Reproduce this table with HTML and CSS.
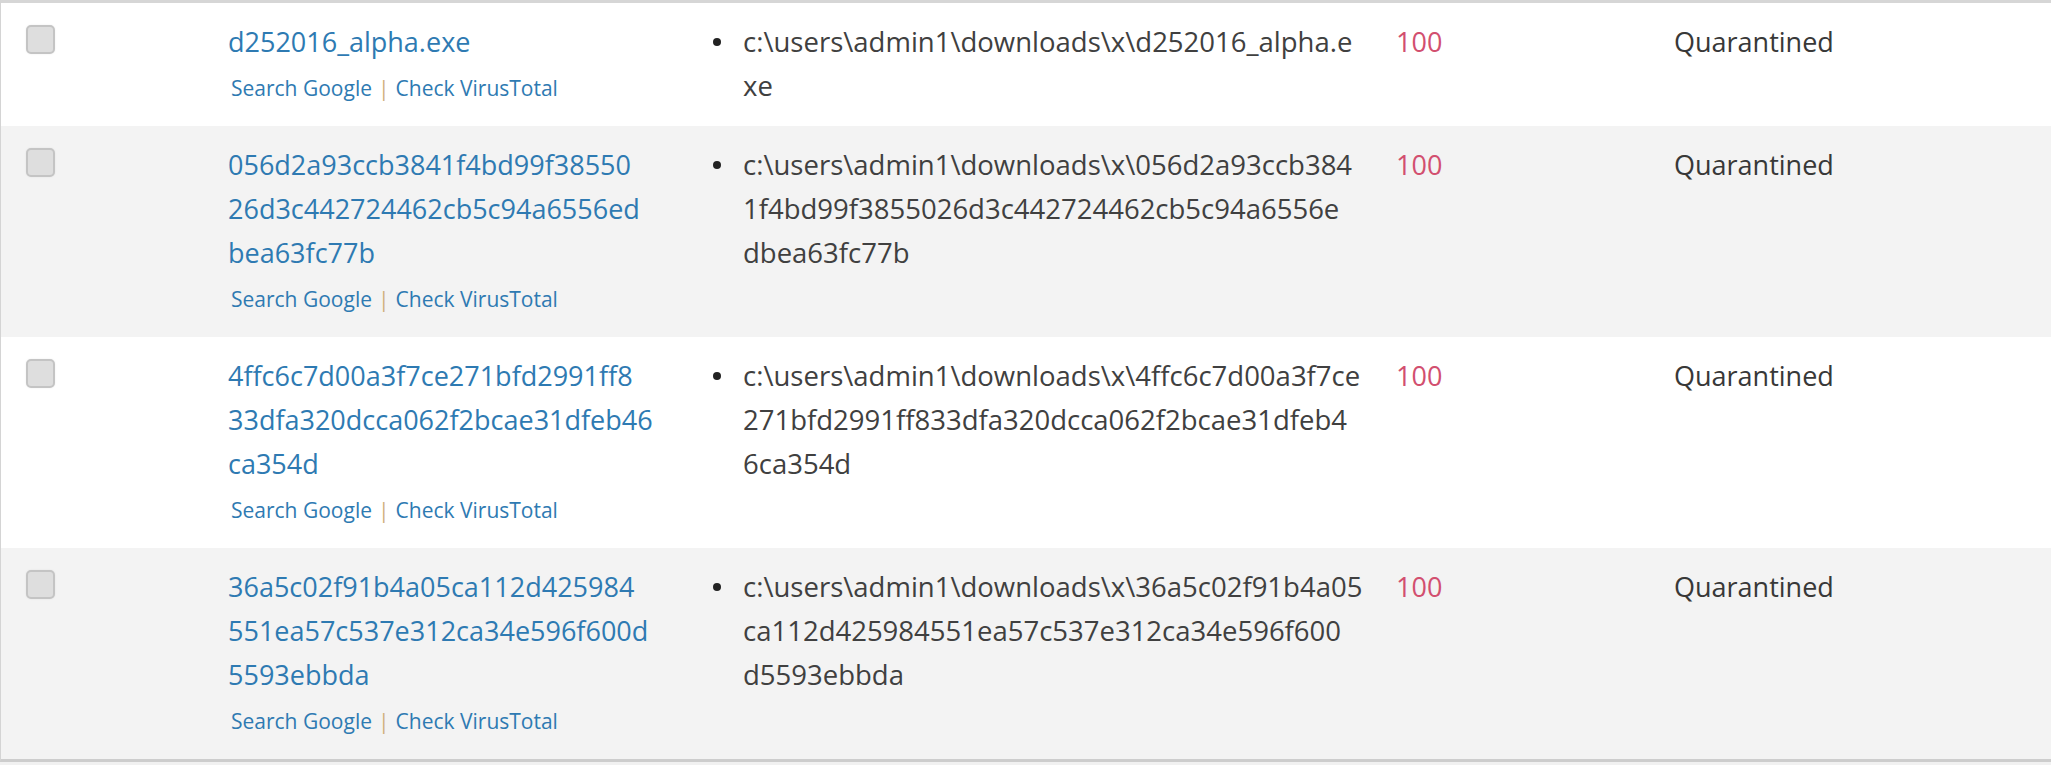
FILE: index.html
```html
<!DOCTYPE html>
<html lang="en">
<head>
<meta charset="utf-8">
<title>Quarantine list</title>
<link rel="stylesheet" href="styles.css">
</head>
<body>
<div class="table">
  <div class="row">
    <div class="cell cell-check"><input type="checkbox" class="cb"></div>
    <div class="cell cell-file">
      <a class="fname" href="#">d252016_alpha.exe</a>
      <div class="row-actions"><a href="#">Search Google</a><span class="sep">|</span><a href="#">Check VirusTotal</a></div>
    </div>
    <div class="cell cell-path">
      <ul class="paths"><li><span>c:\users\admin1\downloads\x\d252016_alpha.e<br>xe</span></li></ul>
    </div>
    <div class="cell cell-score">100</div>
    <div class="cell cell-status">Quarantined</div>
  </div>
  <div class="row alt">
    <div class="cell cell-check"><input type="checkbox" class="cb"></div>
    <div class="cell cell-file">
      <a class="fname" href="#">056d2a93ccb3841f4bd99f38550<br>26d3c442724462cb5c94a6556ed<br>bea63fc77b</a>
      <div class="row-actions"><a href="#">Search Google</a><span class="sep">|</span><a href="#">Check VirusTotal</a></div>
    </div>
    <div class="cell cell-path">
      <ul class="paths"><li><span>c:\users\admin1\downloads\x\056d2a93ccb384<br>1f4bd99f3855026d3c442724462cb5c94a6556e<br>dbea63fc77b</span></li></ul>
    </div>
    <div class="cell cell-score">100</div>
    <div class="cell cell-status">Quarantined</div>
  </div>
  <div class="row">
    <div class="cell cell-check"><input type="checkbox" class="cb"></div>
    <div class="cell cell-file">
      <a class="fname" href="#">4ffc6c7d00a3f7ce271bfd2991ff8<br>33dfa320dcca062f2bcae31dfeb46<br>ca354d</a>
      <div class="row-actions"><a href="#">Search Google</a><span class="sep">|</span><a href="#">Check VirusTotal</a></div>
    </div>
    <div class="cell cell-path">
      <ul class="paths"><li><span>c:\users\admin1\downloads\x\4ffc6c7d00a3f7ce<br>271bfd2991ff833dfa320dcca062f2bcae31dfeb4<br>6ca354d</span></li></ul>
    </div>
    <div class="cell cell-score">100</div>
    <div class="cell cell-status">Quarantined</div>
  </div>
  <div class="row alt">
    <div class="cell cell-check"><input type="checkbox" class="cb"></div>
    <div class="cell cell-file">
      <a class="fname" href="#">36a5c02f91b4a05ca112d425984<br>551ea57c537e312ca34e596f600d<br>5593ebbda</a>
      <div class="row-actions"><a href="#">Search Google</a><span class="sep">|</span><a href="#">Check VirusTotal</a></div>
    </div>
    <div class="cell cell-path">
      <ul class="paths"><li><span>c:\users\admin1\downloads\x\36a5c02f91b4a05<br>ca112d425984551ea57c537e312ca34e596f600<br>d5593ebbda</span></li></ul>
    </div>
    <div class="cell cell-score">100</div>
    <div class="cell cell-status">Quarantined</div>
  </div>
</div>
</body>
</html>
```

FILE: styles.css
```css
html, body {
  margin: 0;
  padding: 0;
  background: #f1f1f1;
}

body {
  font-family: "Open Sans", "Noto Sans", sans-serif;
  color: #404040;
  font-size: 27px;
  line-height: 44px;
}

.table {
  border-top: 3px solid #d6d6d6;
  border-bottom: 3px solid #cdcdcd;
  border-left: 1px solid #d4d4d4;
  background: #ffffff;
}

.row {
  display: grid;
  grid-template-columns: 227px 481px 687px 278px 1fr;
  background: #ffffff;
}

.row.alt {
  background: #f3f3f3;
}

.cell {
  padding: 17px 0 16px 0;
}

.cell-check {
  padding-left: 25px;
}

.cb {
  -webkit-appearance: none;
  appearance: none;
  display: block;
  margin: 5px 0 0 0;
  width: 29px;
  height: 29px;
  box-sizing: border-box;
  border: 2px solid #c4c4c4;
  border-radius: 5px;
  background: #dedede;
  box-shadow: 0 0 2px rgba(0, 0, 0, 0.08);
}

.fname {
  display: block;
  color: #2e7ab2;
  text-decoration: none;
  white-space: nowrap;
}

.row-actions {
  padding: 2px 0 0 3px;
  font-size: 21px;
  line-height: 44px;
  white-space: nowrap;
}

.row-actions a {
  color: #2e7ab2;
  text-decoration: none;
}

.sep {
  color: #cfae7c;
  margin: 0 6px;
}

.cell-path {
  padding-left: 4px;
  font-size: 27.5px;
}

.paths {
  list-style: none;
  margin: 0;
  padding: 0;
}

.paths li {
  display: flex;
  align-items: flex-start;
  white-space: nowrap;
}

.paths li::before {
  content: "";
  flex: none;
  width: 8px;
  height: 8px;
  border-radius: 50%;
  background: #222222;
  margin: 18px 22px 0 0;
}

.cell-score {
  color: #d24f6f;
}

.cell-status {
  color: #383838;
}
```
